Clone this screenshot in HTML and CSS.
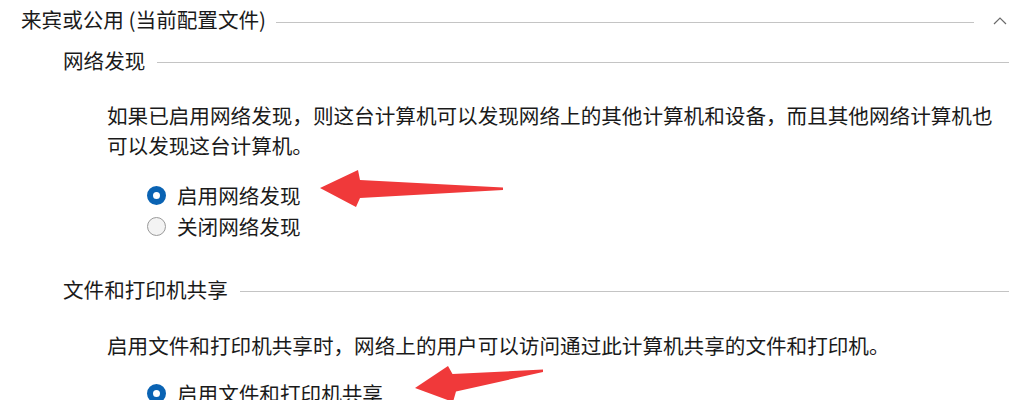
FILE: index.html
```html
<!DOCTYPE html>
<html lang="zh-CN">
<head>
<meta charset="utf-8">
<title>网络和共享设置</title>
<link rel="stylesheet" href="styles.css">
</head>
<body>
<div class="page">
  <div class="group-header">
    <span class="group-title">来宾或公用 (当前配置文件)</span>
    <span class="rule"></span>
    <svg class="chevron" viewBox="0 0 14 8" width="14" height="8"><polyline points="1,7 7,1 13,7" fill="none" stroke="#6b6b6b" stroke-width="1.2"/></svg>
  </div>

  <section class="sub">
    <div class="sub-header">
      <span class="sub-title">网络发现</span>
      <span class="rule"></span>
    </div>
    <p class="desc">如果已启用网络发现，则这台计算机可以发现网络上的其他计算机和设备，而且其他网络计算机也可以发现这台计算机。</p>
    <div class="options">
      <label class="option"><span class="radio checked"></span><span>启用网络发现</span></label>
      <label class="option"><span class="radio"></span><span>关闭网络发现</span></label>
    </div>
  </section>

  <section class="sub sub-second">
    <div class="sub-header">
      <span class="sub-title">文件和打印机共享</span>
      <span class="rule"></span>
    </div>
    <p class="desc desc-second">启用文件和打印机共享时，网络上的用户可以访问通过此计算机共享的文件和打印机。</p>
    <div class="options options-second">
      <label class="option"><span class="radio checked"></span><span>启用文件和打印机共享</span></label>
    </div>
  </section>

  <svg class="arrow arrow-one" viewBox="0 0 210 60" width="210" height="60">
    <polygon points="10,28 48,10 50,20 193,27.5 193,30 50,38 46,47" fill="#f0393a"/>
  </svg>
  <svg class="arrow arrow-two" viewBox="380 355 180 60" width="180" height="60">
    <polygon points="415,388 448,366 452.5,374 543,369.5 543,372 456,391.5 453,402" fill="#f0393a"/>
  </svg>
</div>
</body>
</html>
```

FILE: styles.css
```css
html, body {
  margin: 0;
  padding: 0;
  overflow: hidden;
  background: #ffffff;
}

.page {
  position: relative;
  width: 1009px;
  font-family: "Noto Sans CJK SC", "Noto Sans", sans-serif;
  font-size: 20.6px;
  color: #1a1a1a;
  line-height: 30px;
}

.group-header {
  display: flex;
  align-items: center;
  height: 38px;
  padding-left: 21px;
  padding-right: 2px;
}

.group-title {
  white-space: nowrap;
}

.rule {
  flex: 1;
  height: 1px;
  background: #c4c4c4;
  margin-left: 10px;
  margin-top: 6px;
}

.chevron {
  margin-left: 19px;
  margin-top: 3px;
  display: block;
}

.sub-header {
  display: flex;
  align-items: center;
  height: 44px;
  padding-left: 63px;
}

.sub-title {
  white-space: nowrap;
}

.sub-header .rule {
  margin-left: 12px;
  margin-top: 4px;
}

.desc {
  margin: 18px 0 0 0;
  padding-left: 107px;
  padding-right: 8px;
}

.options {
  margin-top: 19px;
  display: flex;
  flex-direction: column;
}

.option {
  display: flex;
  align-items: center;
  height: 31px;
  padding-left: 147px;
  gap: 11px;
}

.radio {
  box-sizing: border-box;
  width: 19px;
  height: 19px;
  border-radius: 50%;
  border: 1.5px solid #9a9a9a;
  background: #f3f3f3;
  flex: none;
  margin-top: 2px;
}

.radio.checked {
  border: 6px solid #0a63b3;
  background: #ffffff;
}

.sub-second {
  margin-top: 26px;
}

.desc-second {
  margin-top: 19px;
}

.options-second {
  margin-top: 17px;
}

.arrow {
  position: absolute;
  display: block;
}

.arrow-one {
  left: 310px;
  top: 160px;
}

.arrow-two {
  left: 380px;
  top: 355px;
}
```
